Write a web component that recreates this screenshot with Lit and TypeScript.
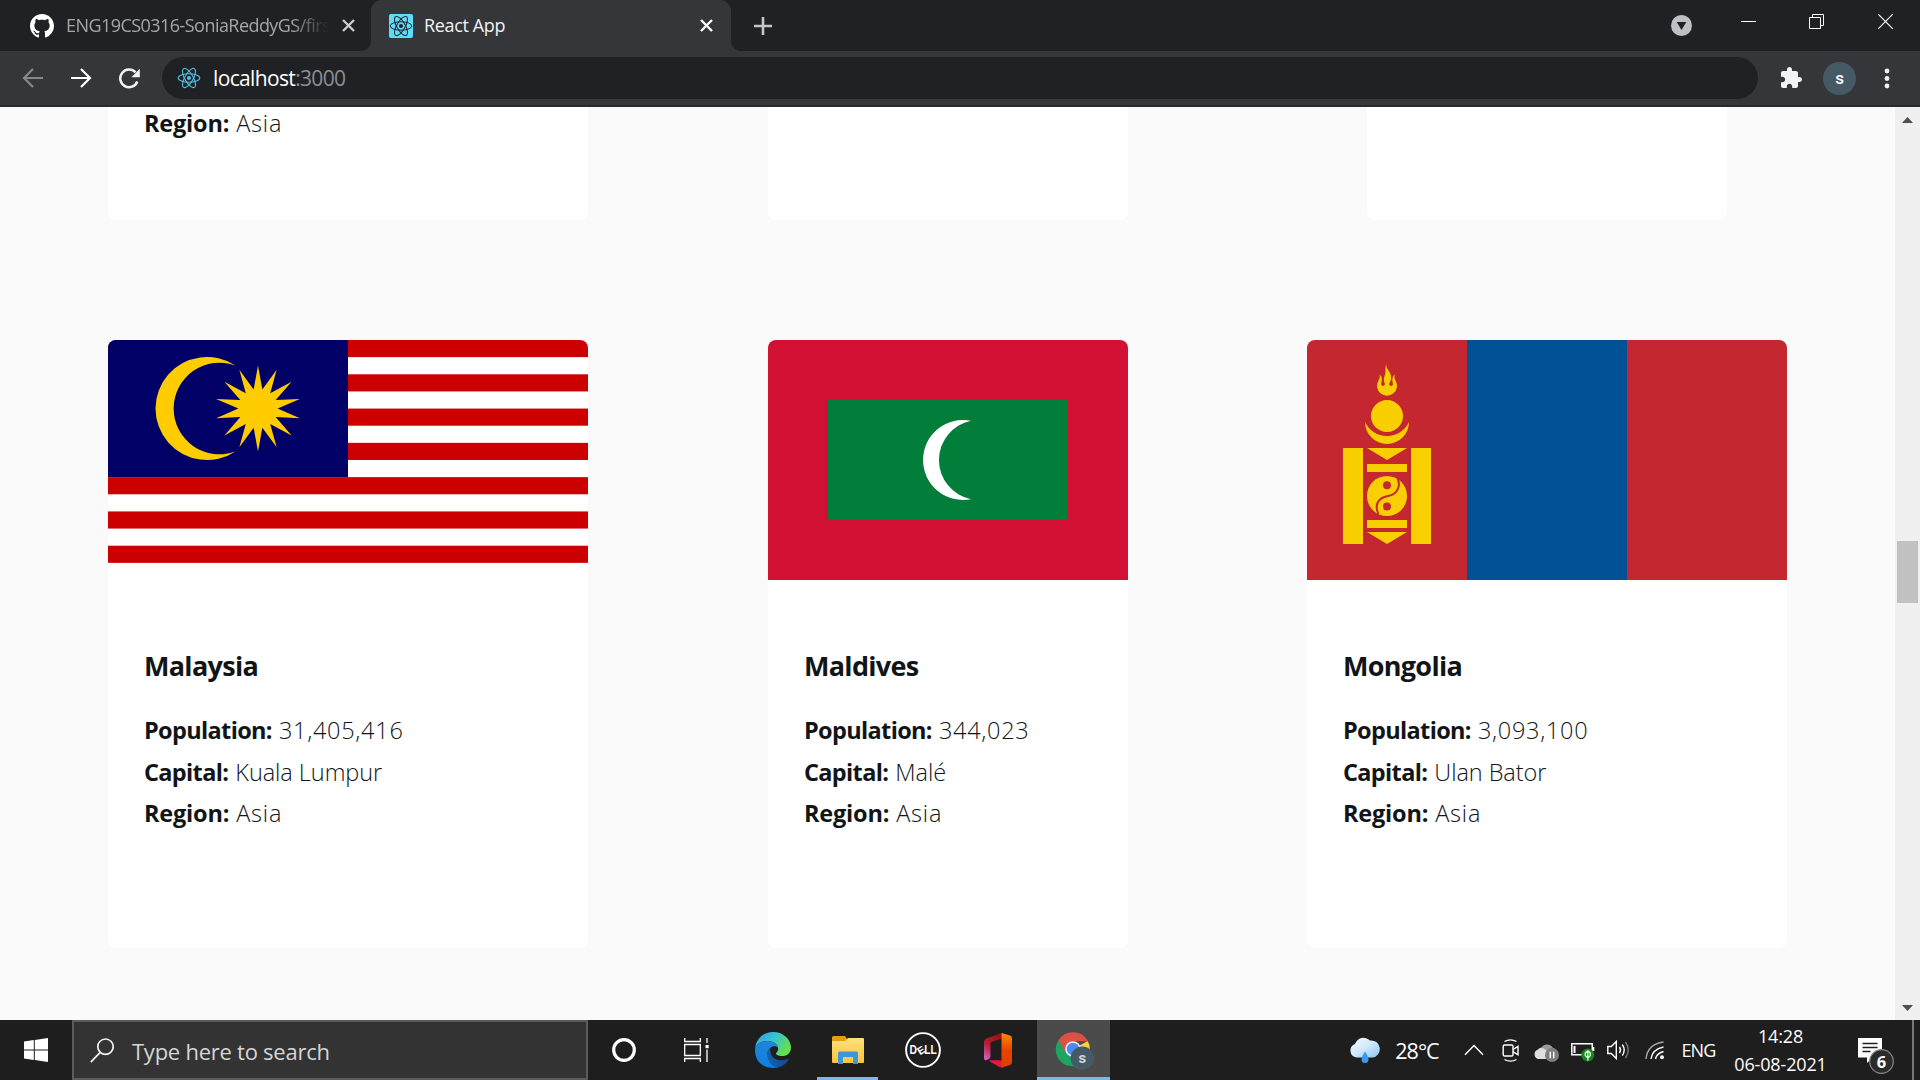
import { LitElement, html, css, svg, nothing, type TemplateResult } from "lit";
import { customElement, property } from "lit/decorators.js";

interface Country {
  name: string;
  population: string;
  capital: string;
  region: string;
  flag: TemplateResult;
  wide: boolean;
}

const starPoints = (cx: number, cy: number, outer: number, inner: number, n: number): string =>
  Array.from({ length: n * 2 }, (_, i) => {
    const r = i % 2 ? inner : outer;
    const a = (Math.PI * i) / n;
    return `${(cx + r * Math.sin(a)).toFixed(2)},${(cy - r * Math.cos(a)).toFixed(2)}`;
  }).join(" ");

const malaysia = html`<svg width="480" height="240" viewBox="0 0 480 240">
  <rect width="480" height="240" fill="#fff" />
  ${[0, 1, 2, 3, 4, 5, 6].map(
    (i) => svg`<rect y=${(i * 2 * 240) / 14} width="480" height=${240 / 14} fill="#c00" />`,
  )}
  <rect width="240" height="137.14" fill="#006" />
  <path d="M127.500 25.600A51.500 51.500 0 1 0 127.500 111.400A45.800 45.800 0 1 1 127.500 25.600Z" fill="#fc0" />
  <polygon points=${starPoints(150, 68.6, 43, 19.6, 14)} fill="#fc0" />
</svg>`;

const maldives = html`<svg width="360" height="240" viewBox="0 0 360 240">
  <rect width="360" height="240" fill="#d21034" />
  <rect x="60" y="60" width="240" height="120" fill="#007e3a" />
  <path d="M203 80.800A40 40 0 1 0 203 159.200A40 40 0 0 1 203 80.800Z" fill="#fff" />
</svg>`;

const mongolia = html`<svg width="480" height="240" viewBox="0 0 480 240">
  <rect width="480" height="240" fill="#c4272f" />
  <rect x="160" width="160" height="240" fill="#015197" />
  <g fill="#f9cf02">
    <path d="M36 108h20v96H36zM104 108h20v96h-20zM60 108h40l-20 12zM60 124h40v8H60zM60 180h40v8H60zM60 192h40l-20 12z" />
    <circle cx="80" cy="76" r="16" />
    <path d="M58 82A22 22 0 1 0 102 82A24.300 24.300 0 0 1 58 82Z" />
    <path d="M79.200 24C77.600 29 79.500 31.500 77.600 36C76.500 39 76.600 41 77.800 43.500A1.900 1.900 0 1 1 74.300 43C75.300 40 75.300 37 72.700 34.500C73 37.500 72.600 38.500 71.500 40.500A10 10 0 1 0 88.500 40.500C87.400 38.500 87.200 37 87.700 34.300C85 37 85 40 85.700 43A1.900 1.900 0 1 1 82.300 43.500C84.500 39.500 84.800 37 83 33C81.200 29.500 79 28 79.200 24Z" />
    <circle cx="80" cy="156" r="20" />
  </g>
  <path d="M90.500 138.500C93.500 144 92 154 81 156C70 158 67.500 166 71.500 174" fill="none" stroke="#c4272f" stroke-width="2" />
  <circle cx="80" cy="145.300" r="4" fill="#c4272f" />
  <circle cx="80" cy="166.500" r="4" fill="#c4272f" />
</svg>`;

const countries: Country[] = [
  { name: "Malaysia", population: "31,405,416", capital: "Kuala Lumpur", region: "Asia", flag: malaysia, wide: true },
  { name: "Maldives", population: "344,023", capital: "Malé", region: "Asia", flag: maldives, wide: false },
  { name: "Mongolia", population: "3,093,100", capital: "Ulan Bator", region: "Asia", flag: mongolia, wide: true },
];

const factStyles = css`
  .row { height: 41.5px; line-height: 41.5px; font-size: 23.5px; font-weight: 300; white-space: nowrap; color: #111517; }
  .key { font-weight: 700; letter-spacing: -0.65px; margin-right: 7px; }
  .population { letter-spacing: 0.72px; }
  .capital { letter-spacing: -0.05px; }
  .region { letter-spacing: 0.8px; }
  .region .key { letter-spacing: -0.2px; }
`;

const atom = (size: number, color: string, width: number) => html`<svg width=${size} height=${size} viewBox="-12 -12 24 24">
  <g fill="none" stroke=${color} stroke-width=${width}>
    <ellipse rx="10.800" ry="4.200" />
    <ellipse rx="10.800" ry="4.200" transform="rotate(60)" />
    <ellipse rx="10.800" ry="4.200" transform="rotate(120)" />
  </g>
  <circle r="2.100" fill=${color} />
</svg>`;

const cross = (size: number, color: string, width: number) => html`<svg width=${size} height=${size} viewBox="0 0 ${size} ${size}">
  <path d="M1 1L${size - 1} ${size - 1}M${size - 1} 1L1 ${size - 1}" stroke=${color} stroke-width=${width} />
</svg>`;

@customElement("browser-chrome")
export class BrowserChrome extends LitElement {
  static styles = css`
    :host { display: block; font-family: "Open Sans", "Noto Sans", sans-serif; }
    svg { display: block; flex: none; }
    .tabs { display: flex; height: 51px; background: #202124; }
    .tab { display: flex; align-items: center; height: 51px; box-sizing: border-box; }
    .idle { width: 371px; padding: 0 16px 0 30px; }
    .idle .label {
      width: 263px; margin-left: 12px; margin-right: 13px; margin-top: -2px; overflow: hidden; white-space: nowrap;
      font-size: 18px; letter-spacing: -0.55px; color: #a3a8ad;
      -webkit-mask-image: linear-gradient(90deg, #000 225px, transparent 263px);
      mask-image: linear-gradient(90deg, #000 225px, transparent 263px);
    }
    .active { position: relative; width: 360px; padding: 0 18px 0 18px; background: #35363a; border-radius: 11px 11px 0 0; }
    .active::before, .active::after { content: ""; position: absolute; bottom: 0; width: 10px; height: 10px; }
    .active::before { left: -10px; background: radial-gradient(circle at 0 0, #202124 9.5px, #35363a 10.5px); }
    .active::after { right: -10px; background: radial-gradient(circle at 100% 0, #202124 9.5px, #35363a 10.5px); }
    .fav { width: 24px; height: 24px; border-radius: 2px; background: #61dafb; flex: none; }
    .active .label { flex: 1; margin: -2px 0 0 11px; font-size: 18px; letter-spacing: -0.35px; color: #f1f3f4; white-space: nowrap; }
    .plus { margin: 17px 0 0 23px; }
    .controls { display: flex; margin-left: auto; padding-right: 27px; align-items: flex-start; }
    .drop { margin-top: 15px; }
    .min { margin: 21px 0 0 49px; width: 15px; height: 1px; background: #fff; }
    .max { margin: 14px 0 0 53px; }
    .shut { margin: 14px 0 0 54px; }
    .toolbar {
      display: flex; align-items: center; height: 56px; box-sizing: border-box; background: #35363a;
      border-bottom: 2px solid #28292b; padding: 0 29px 0 22px;
    }
    .fwd { margin-left: 26px; }
    .reload { margin-left: 27px; }
    .omni { display: flex; align-items: center; width: 1596px; height: 42px; margin-left: 22px; box-sizing: border-box; padding-left: 15px; border-radius: 21px; background: #202124; flex: none; }
    .url { margin-left: 12px; font-size: 21px; letter-spacing: -0.65px; color: #fff; white-space: nowrap; }
    .port { color: #8b8f94; }
    .ext { margin-left: 21px; }
    .avatar { display: flex; align-items: center; justify-content: center; width: 33px; height: 33px; box-sizing: border-box; padding-bottom: 2px; margin: 1px 0 0 20px; border-radius: 50%; background: #455a64; color: #fff; font: 500 17px Roboto, sans-serif; flex: none; }
    .dots { margin-left: 28px; }
  `;

  render() {
    return html`
      <div class="tabs">
        <div class="tab idle">
          <svg width="24" height="24" viewBox="0 0 16 16"><path fill="#fff" d="M8 0C3.58 0 0 3.58 0 8c0 3.54 2.29 6.53 5.47 7.59.4.07.55-.17.55-.38 0-.19-.01-.82-.01-1.49-2.01.37-2.53-.49-2.69-.94-.09-.23-.48-.94-.82-1.13-.28-.15-.68-.52-.01-.53.63-.01 1.08.58 1.23.82.72 1.21 1.87.87 2.33.66.07-.52.28-.87.51-1.07-1.78-.2-3.64-.89-3.64-3.95 0-.87.31-1.59.82-2.15-.08-.2-.36-1.02.08-2.12 0 0 .67-.21 2.2.82.64-.18 1.32-.27 2-.27s1.36.09 2 .27c1.53-1.04 2.2-.82 2.2-.82.44 1.1.16 1.92.08 2.12.51.56.82 1.27.82 2.15 0 3.07-1.87 3.75-3.65 3.95.29.25.54.73.54 1.48 0 1.07-.01 1.93-.01 2.2 0 .21.15.46.55.38A8.01 8.01 0 0 0 16 8c0-4.42-3.58-8-8-8z" /></svg>
          <span class="label">ENG19CS0316-SoniaReddyGS/firs</span>
          ${cross(13, "#c8cbcf", 2.4)}
        </div>
        <div class="tab active">
          <span class="fav">${atom(24, "#20232a", 1)}</span>
          <span class="label">React App</span>
          ${cross(13, "#fff", 2.4)}
        </div>
        <svg class="plus" width="18" height="18" viewBox="0 0 18 18"><path d="M9 0v18M0 9h18" stroke="#c4c7c9" stroke-width="2.600" /></svg>
        <div class="controls">
          <svg class="drop" width="21" height="21" viewBox="0 0 21 21"><circle cx="10.500" cy="10.500" r="10.500" fill="#bdc1c6" /><path d="M5.700 7h9.600l-4.800 8z" fill="#202124" /></svg>
          <span class="min"></span>
          <svg class="max" width="15" height="15" viewBox="0 0 15 15"><path d="M.5 3.500h11v11H.5zM3.500 3.500v-3h11v11h-3" fill="none" stroke="#fff" /></svg>
          <svg class="shut" width="15" height="15" viewBox="0 0 15 15"><path d="M0 0L15 15M15 0L0 15" stroke="#fff" stroke-width="1.200" /></svg>
        </div>
      </div>
      <div class="toolbar">
        <svg width="22" height="20" viewBox="0 0 22 20"><path d="M21 10H2.500M11 1L2 10l9 9" fill="none" stroke="#86888a" stroke-width="2.200" /></svg>
        <svg class="fwd" width="22" height="20" viewBox="0 0 22 20"><path d="M1 10h18.500M11 1l9 9-9 9" fill="none" stroke="#fff" stroke-width="2.200" /></svg>
        <svg class="reload" width="21" height="21" viewBox="0 0 21 21"><path d="M18.300 13.500A8.800 8.800 0 1 1 16.500 4.400" fill="none" stroke="#f1f3f4" stroke-width="2.500" /><path d="M20.800 .8v8.400h-8.400z" fill="#f1f3f4" /></svg>
        <div class="omni">
          ${atom(24, "#53bddb", 1.1)}
          <span class="url">localhost<span class="port">:3000</span></span>
        </div>
        <svg class="ext" width="24" height="24" viewBox="0 0 24 24"><path fill="#f1f3f4" d="M20.500 11H19V7c0-1.100-.9-2-2-2h-4V3.500C13 2.120 11.880 1 10.500 1S8 2.120 8 3.500V5H4c-1.100 0-1.990.9-1.990 2v3.800H3.500c1.490 0 2.700 1.210 2.700 2.700s-1.210 2.700-2.700 2.700H2V20c0 1.100.9 2 2 2h3.800v-1.500c0-1.490 1.210-2.700 2.700-2.700 1.490 0 2.700 1.210 2.700 2.700V22H17c1.100 0 2-.9 2-2v-4h1.500c1.380 0 2.500-1.120 2.500-2.500S21.880 11 20.500 11z" /></svg>
        <span class="avatar">s</span>
        <svg class="dots" width="6" height="21" viewBox="0 0 6 21"><g fill="#f1f3f4"><circle cx="3" cy="3" r="2.400" /><circle cx="3" cy="10.500" r="2.400" /><circle cx="3" cy="18" r="2.400" /></g></svg>
      </div>
    `;
  }
}

@customElement("country-card")
export class CountryCard extends LitElement {
  @property({ attribute: false }) country?: Country;

  static styles = [
    factStyles,
    css`
      :host { display: block; font-family: "Open Sans", "Noto Sans", sans-serif; color: #111517; }
      .card { height: 608px; background: #fff; border-radius: 8px; overflow: hidden; width: 360px; }
      .wide { width: 480px; }
      svg { display: block; }
      .body { padding: 69px 36px 0; }
      .name { margin: 0 0 27px; height: 34px; line-height: 34px; font-size: 27px; font-weight: 700; letter-spacing: -0.7px; }
    `,
  ];

  render() {
    const c = this.country;
    if (!c) return nothing;
    return html`<article class="card ${c.wide ? "wide" : ""}">
      ${c.flag}
      <div class="body">
        <h2 class="name">${c.name}</h2>
        <div class="row population"><span class="key">Population:</span>${c.population}</div>
        <div class="row capital"><span class="key">Capital:</span>${c.capital}</div>
        <div class="row region"><span class="key">Region:</span>${c.region}</div>
      </div>
    </article>`;
  }
}

@customElement("task-bar")
export class TaskBar extends LitElement {
  static styles = css`
    :host { display: block; font-family: "Open Sans", "Noto Sans", sans-serif; color: #fff; }
    svg { display: block; flex: none; }
    .bar { display: flex; height: 60px; background: #1e1e1e; }
    .start { display: flex; align-items: center; justify-content: center; width: 72px; }
    .search { display: flex; align-items: center; width: 516px; box-sizing: border-box; border: 2px solid #5b5b5b; background: #333; padding-left: 16px; }
    .hint { margin: 1px 0 0 18px; font-size: 22px; letter-spacing: -0.25px; color: #d6d6d6; }
    .apps { display: flex; }
    .sys, .app { display: flex; align-items: center; justify-content: center; box-sizing: border-box; }
    .sys { width: 72px; }
    .app { width: 75px; }
    .app:nth-child(3) { margin-left: 3px; }
    .open { width: 61px; margin: 0 7px; border-bottom: 3px solid #76b9ed; padding-top: 3px; }
    .current { width: 73px; margin-left: 2px; background: #4b4b4b; border-bottom: 3px solid #76b9ed; padding: 3px 0 0 3px; }
    .tray {
      display: grid; margin-left: auto; padding-right: 6px; align-items: center; justify-items: center;
      grid-template-columns: 41px 64px 43px 37px 35px 37px 35px 38px 49px 115px 74px 2px;
    }
    .temp { font-size: 21.5px; letter-spacing: -1px; }
    .lang { font-size: 18px; letter-spacing: -0.8px; }
    .chev { margin-left: 7px; }
    .cloud { margin-top: 4px; }
    .note { margin-top: 12px; }
    .clock { text-align: center; font-size: 18px; line-height: 28px; letter-spacing: -0.15px; }
    .edge { width: 2px; height: 60px; background: #777; }
  `;

  render() {
    return html`<div class="bar">
      <div class="start">
        <svg width="24" height="24" viewBox="0 0 24 24"><path fill="#fff" d="M0 3.400L9.800 2v9.500H0zM10.800 1.900L24 0v11.500H10.800zM0 12.500h9.800V22L0 20.600zM10.800 12.500H24V24l-13.200-1.900z" /></svg>
      </div>
      <div class="search">
        <svg width="24" height="25" viewBox="0 0 24 25"><g fill="none" stroke="#f0f0f0" stroke-width="1.700"><circle cx="15.500" cy="8.700" r="7.700" /><path d="M10.200 14.300L.8 24.200" /></g></svg>
        <span class="hint">Type here to search</span>
      </div>
      <div class="apps">
        <div class="sys"><svg width="24" height="24" viewBox="0 0 24 24"><circle cx="12" cy="12" r="10.300" fill="none" stroke="#fff" stroke-width="3.200" /></svg></div>
        <div class="sys"><svg width="25" height="24" viewBox="0 0 25 24"><path d="M.7 0v3.500h15.600V0M.7 6.500h15.600v11H.7zM.7 24v-3.500h15.600V24M23 0v5M23 11.500V24" fill="none" stroke="#fff" stroke-width="1.300" /><path d="M21.500 7h3.200v3.200h-3.200z" fill="#fff" /></svg></div>
        <div class="app">
          <svg width="36" height="36" viewBox="0 0 36 36">
            <defs>
              <linearGradient id="ea" x1="0" y1="0" x2="1" y2="0.500"><stop offset="0" stop-color="#2f9fe8" /><stop offset=".5" stop-color="#35c1d6" /><stop offset="1" stop-color="#66e04b" /></linearGradient>
              <linearGradient id="eb" x1="0" y1="0" x2="0" y2="1"><stop offset="0" stop-color="#1f86d8" /><stop offset="1" stop-color="#0f7fe0" /></linearGradient>
              <linearGradient id="ec" x1="0" y1="0" x2="1" y2="0"><stop offset="0" stop-color="#1262ae" /><stop offset="1" stop-color="#134a91" /></linearGradient>
            </defs>
            <path d="M0 17C1 6 9 0 18 0C29 0 36 8 36 15.500C36 21.500 31.500 24 27.500 24C23 24 21 22.500 21 21.500C21 20.500 23.200 20 23.200 16.500C23.200 12 18 9 12 9C6 9 1 12.500 0 17Z" fill="url(#ea)" />
            <path d="M0 18C0 12.500 6 9 12 9C18 9 23 12 23.200 16C21 13 15 13.500 13 19C11 27 17 35.500 24 35C17 37.500 0 35.500 0 18Z" fill="url(#eb)" />
            <path d="M15 15.500C12.500 18 11.500 22 13 26.500C15 32.500 20 36 24 35C29 33.500 32 30.500 33.300 28C33.600 27 33 26.700 32.200 27C24 30.500 16.500 26.500 15.500 20.500C15 18 15.500 16.500 15 15.500Z" fill="url(#ec)" />
          </svg>
        </div>
        <div class="app open">
          <svg width="32" height="28" viewBox="0 0 32 28">
            <defs><linearGradient id="fo" x1="0" y1="0" x2="0" y2="1"><stop offset="0" stop-color="#ffdf7e" /><stop offset="1" stop-color="#fcc53c" /></linearGradient></defs>
            <path d="M0 1.500Q0 0 1.500 0H13l2 3H31q1 0 1 1v4H0z" fill="#e0a106" />
            <path d="M0 5h13l3-3h15q1 0 1 1v23q0 1-1 1H1q-1 0-1-1z" fill="url(#fo)" />
            <path d="M6 28V17q0-1.500 1.500-1.500h17Q26 15.500 26 17v11h-5v-7H11v7z" fill="#3a96dd" />
          </svg>
        </div>
        <div class="app">
          <svg width="36" height="36" viewBox="0 0 36 36"><circle cx="18" cy="18" r="16.900" fill="none" stroke="#fff" stroke-width="1.900" /><text x="4.600" y="22.400" font-family="Liberation Sans, sans-serif" font-weight="700" font-size="12" fill="#fff" textLength="7.500" lengthAdjust="spacingAndGlyphs">D</text><text x="-3.600" y="3.800" transform="translate(16 18) rotate(-32)" font-family="Liberation Sans, sans-serif" font-weight="700" font-size="10.500" fill="#fff">E</text><text x="19.300" y="22.400" font-family="Liberation Sans, sans-serif" font-weight="700" font-size="12" fill="#fff" textLength="12.500" lengthAdjust="spacingAndGlyphs">LL</text></svg>
        </div>
        <div class="app">
          <svg width="28" height="35" viewBox="0 0 28 35">
            <defs>
              <linearGradient id="oa" x1="0" y1="0" x2="0" y2="1"><stop offset="0" stop-color="#ff8a00" /><stop offset=".5" stop-color="#ea4300" /><stop offset="1" stop-color="#e03c00" /></linearGradient>
              <linearGradient id="ob" x1="0.600" y1="0" x2="0.200" y2="1"><stop offset="0" stop-color="#9c1111" /><stop offset=".5" stop-color="#b81c35" /><stop offset="1" stop-color="#ca64c6" /></linearGradient>
            </defs>
            <path d="M17.500 0L3 5.300Q0 6.500 0 9.500v15.700Q0 28 2.500 27L5 26Q6.500 25.200 6.500 23V11Q6.500 9.300 8 8.700L17.500 5.500z" fill="url(#ob)" />
            <path d="M5.500 28.200L15 33.700Q17.500 35 20 34l-2.500-6.700H6.200Q4.500 27.500 5.500 28.200z" fill="#e5193f" />
            <path d="M17.500 0L26 2.600Q28 3.300 28 5.500v24Q28 31.500 26 32.100L17.500 34.700z" fill="url(#oa)" />
          </svg>
        </div>
        <div class="app current">
          <svg width="40" height="40" viewBox="0 0 40 40">
            <path d="M18 19L32.800 11A17 17 0 0 1 18 36z" fill="#ffcd46" />
            <path d="M18 19L18 36.200A17 17 0 0 1 3.500 10.500z" fill="#1da462" />
            <path d="M18 11.200h15A17 17 0 0 0 3.500 10.500l7.200 12z" fill="#dd5144" />
            <path d="M3.500 10.500l7.300 12.400 7 5-5 8A17 17 0 0 1 3.500 10.500z" fill="#1da462" />
            <circle cx="18" cy="19" r="7.800" fill="#f1f1f1" /><circle cx="18" cy="19" r="6.200" fill="#4c8bf5" />
            <circle cx="27.300" cy="28.200" r="11.700" fill="#455a64" />
            <text x="27.300" y="32.500" text-anchor="middle" font-family="Roboto, sans-serif" font-weight="700" font-size="15" fill="#cfd6da">s</text>
          </svg>
        </div>
      </div>
      <div class="tray">
        <svg width="32" height="28" viewBox="0 0 32 28">
          <defs><linearGradient id="we" x1="0" y1="0" x2="1" y2="1"><stop offset="0" stop-color="#f3faff" /><stop offset=".5" stop-color="#cfe9fb" /><stop offset="1" stop-color="#8cc5ee" /></linearGradient></defs>
          <path d="M7.500 21.500A7 7 0 0 1 6 8A9 9 0 0 1 21 4.500A8.500 8.500 0 1 1 23.500 21.500Z" fill="url(#we)" />
          <path d="M16 15.500C18 19 19.500 21 19.500 23.400A3.500 3.500 0 0 1 12.500 23.400C12.500 21 14 19 16 15.500Z" fill="#3c97ee" />
        </svg>
        <span class="temp">28°C</span>
        <svg class="chev" width="20" height="12" viewBox="0 0 20 12"><path d="M1 10.800L10 1.500l9 9.300" fill="none" stroke="#fff" stroke-width="1.500" /></svg>
        <svg width="18" height="23" viewBox="0 0 18 23"><g fill="none" stroke="#fff" stroke-width="1.400"><rect x="1.200" y="6" width="9.800" height="11" rx="1.300" /><path d="M11 10.500l5-3.200v8.500l-5-3.200M2.500 2.500Q8.500-.7 14.500 2.500M2.500 20.500Q8.500 23.700 14.500 20.500" /></g></svg>
        <svg class="cloud" width="25" height="20" viewBox="0 0 25 20">
          <path d="M7 6A7 7 0 0 1 19 6A5 5 0 0 1 21 15H10z" fill="#9b9b9b" />
          <path d="M4 17A5 5 0 0 1 4 7.500Q6 4.500 9.500 6.500L19 13V17z" fill="#dedede" />
          <circle cx="18" cy="13" r="7" fill="#7d7d7d" /><path d="M16.300 9.700v6.600M19.700 9.700v6.600" stroke="#fff" stroke-width="1.500" />
        </svg>
        <svg width="24" height="26" viewBox="0 -5 24 26"><path d="M.8 1.800h20.500v11H.8z" fill="none" stroke="#fff" stroke-width="1.500" /><path d="M2.500 4h2v7h-2zM21.500 5h1.800v4h-1.800z" fill="#fff" /><circle cx="16.800" cy="13" r="6.500" fill="#12891a" /><path d="M16.800 8v10.500M14.300 11q2.500-3 5 0v2.500q-2.500 4-5 0z" fill="none" stroke="#fff" stroke-width="1.300" /></svg>
        <svg width="23" height="20" viewBox="0 0 23 20"><path d="M.8 6.500H4.300L9.300 1.500v17l-5-5H.8z" fill="none" stroke="#fff" stroke-width="1.400" /><path d="M12.500 7q2 3 0 6M15.300 4.500q3.800 5.500 0 11" fill="none" stroke="#fff" stroke-width="1.400" /><path d="M18.500 2q5.500 8 0 16" fill="none" stroke="#777" stroke-width="1.400" /></svg>
        <svg width="20" height="20" viewBox="0 0 20 20"><g fill="none" stroke="#fff" stroke-width="1.400"><path d="M10.500 19Q11.500 13.500 18.500 11.500M6 19Q7 9.500 18.500 7" /><path d="M1 19Q2.500 4 18.500 2" stroke="#aaa" /></g><circle cx="17" cy="17.300" r="2" fill="#fff" /></svg>
        <span class="lang">ENG</span>
        <div class="clock"><div>14:28</div><div>06-08-2021</div></div>
        <svg class="note" width="37" height="38" viewBox="0 0 37 38">
          <path d="M1 1h24v19.500H15.500L10 26v-5.500H1z" fill="#fff" /><path d="M5.500 6.500h15M5.500 10.500h15M5.500 14.500h8" stroke="#1e1e1e" stroke-width="1.300" />
          <circle cx="24.500" cy="24.500" r="11.800" fill="#2b2b2b" stroke="#8a8a8a" stroke-width="1.200" />
          <text x="24.500" y="30.500" text-anchor="middle" font-family="Open Sans, sans-serif" font-weight="700" font-size="16.500" fill="#fff">6</text>
        </svg>
        <span class="edge"></span>
      </div>
    </div>`;
  }
}

@customElement("app-root")
export class AppRoot extends LitElement {
  static styles = [
    factStyles,
    css`
      :host { display: block; width: 1920px; height: 1080px; overflow: hidden; font-family: "Open Sans", "Noto Sans", sans-serif; }
      .view { display: flex; height: 913px; }
      .page { width: 1895px; background: #fafafa; }
      .grid { display: grid; grid-template-columns: 600px 600px 598px; padding: 0 49px 0 48px; row-gap: 120px; justify-items: center; overflow: hidden; height: 913px; align-content: start; box-sizing: border-box; }
      .stub { width: 360px; height: 113px; box-sizing: border-box; background: #fff; border-radius: 0 0 8px 8px; }
      .wide { width: 480px; padding: 0 36px; }
      .stub .row { height: 32px; line-height: 32px; }
      .scroll { display: flex; flex-direction: column; align-items: center; width: 25px; box-sizing: border-box; background: #f0f0f0; padding: 10px 0 9px; }
      .thumb { width: 21px; height: 62px; margin-top: 418px; margin-bottom: auto; background: #c1c1c1; }
      svg { display: block; }
    `,
  ];

  render() {
    return html`
      <browser-chrome></browser-chrome>
      <div class="view">
        <main class="page">
          <div class="grid">
            <div class="stub wide"><div class="row region"><span class="key">Region:</span>Asia</div></div>
            <div class="stub"></div>
            <div class="stub"></div>
            ${countries.map((c) => html`<country-card .country=${c}></country-card>`)}
          </div>
        </main>
        <div class="scroll">
          <svg width="11" height="6" viewBox="0 0 11 6"><path d="M0 6L5.500 0L11 6z" fill="#505050" /></svg>
          <div class="thumb"></div>
          <svg width="11" height="6" viewBox="0 0 11 6"><path d="M0 0L5.500 6L11 0z" fill="#505050" /></svg>
        </div>
      </div>
      <task-bar></task-bar>
    `;
  }
}
